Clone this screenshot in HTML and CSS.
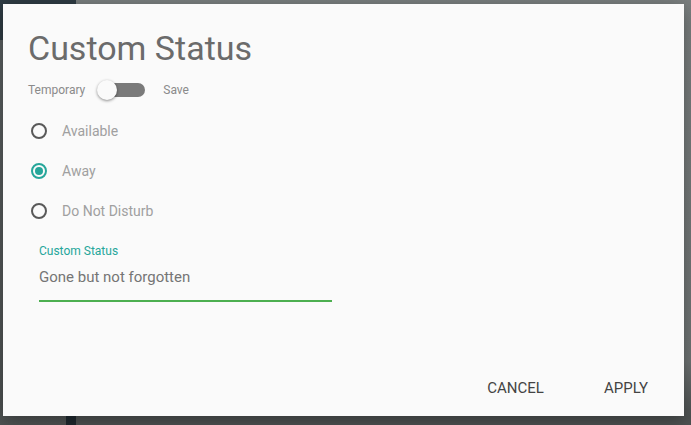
FILE: index.html
```html
<!DOCTYPE html>
<html lang="en">
<head>
  <meta charset="UTF-8" />
  <meta name="viewport" content="width=device-width, initial-scale=1.0"/>
  <title>Custom Status</title>
  <link rel="stylesheet" href="styles.css">
</head>
<body>
  <div class="app">
    <div class="sidebar">
      <div class="sidebar-top"></div>
      <div class="sidebar-body">
        <div class="sidebar-list"></div>
        <div class="sidebar-edge"></div>
      </div>
    </div>
    <div class="main"></div>
  </div>

  <div class="dialog">
    <h1 class="dialog-title">Custom Status</h1>

    <div class="switch-row">
      <span class="switch-label">Temporary</span>
      <span class="switch">
        <span class="switch-track"></span>
        <span class="switch-thumb"></span>
      </span>
      <span class="switch-label">Save</span>
    </div>

    <div class="radio-group">
      <label class="radio"><span class="radio-dot"></span>Available</label>
      <label class="radio checked"><span class="radio-dot"></span>Away</label>
      <label class="radio"><span class="radio-dot"></span>Do Not Disturb</label>
    </div>

    <div class="field">
      <div class="field-label">Custom Status</div>
      <div class="field-input">Gone but not forgotten</div>
    </div>

    <div class="actions">
      <button class="btn">Cancel</button>
      <button class="btn">Apply</button>
    </div>
  </div>
</body>
</html>
```

FILE: styles.css
```css
* {
  margin: 0;
  padding: 0;
  box-sizing: border-box;
}

html, body {
  width: 100%;
  height: 100%;
  overflow: hidden;
  font-family: Roboto, 'Liberation Sans', sans-serif;
  background-color: #4e5252;
}

/* app behind the modal */
.app {
  display: flex;
  height: 100%;
}

.sidebar {
  width: 76px;
  display: flex;
  flex-direction: column;
}

.sidebar-top {
  height: 40px;
  background: #2f3c44;
}

.sidebar-body {
  flex: 1;
  display: flex;
}

.sidebar-list {
  flex: 1;
  background: linear-gradient(to bottom, #5b6061, #4f5353);
}

.sidebar-edge {
  width: 10px;
  background: #1f292f;
}

.main {
  flex: 1;
  background: linear-gradient(to bottom, #7b8080, #6f7474 85%, #4e5252 98%);
}

/* dialog */
.dialog {
  position: absolute;
  top: 4px;
  left: 3px;
  width: 681px;
  height: 412px;
  background: #fafafa;
  box-shadow: 0 4px 18px rgba(0,0,0,0.35);
  padding: 25px 25px 0;
  display: flex;
  flex-direction: column;
}

.dialog-title {
  font-size: 34px;
  font-weight: 400;
  color: #6b6b6b;
  line-height: 38px;
}

.switch-row {
  display: flex;
  align-items: center;
  margin-top: 13px;
  height: 20px;
}

.switch-label {
  font-size: 12px;
  color: #8a8a8a;
}

.switch {
  position: relative;
  width: 48px;
  height: 20px;
  margin: 0 18px 0 12px;
  display: flex;
  align-items: center;
}

.switch-track {
  margin-left: 4px;
  width: 44px;
  height: 14px;
  border-radius: 7px;
  background: #7a7a7a;
}

.switch-thumb {
  position: absolute;
  left: 0;
  top: 0;
  width: 20px;
  height: 20px;
  border-radius: 50%;
  background: #fafafa;
  box-shadow: 0 1px 3px rgba(0,0,0,0.45);
}

.radio-group {
  display: flex;
  flex-direction: column;
  margin-top: 11px;
}

.radio {
  display: flex;
  align-items: center;
  height: 40px;
  font-size: 14px;
  color: #a0a0a0;
}

.radio-dot {
  width: 16px;
  height: 16px;
  border: 2px solid #595959;
  border-radius: 50%;
  margin: 0 15px 0 3px;
  display: flex;
  align-items: center;
  justify-content: center;
}

.radio.checked .radio-dot {
  border-color: #26a69a;
}

.radio.checked .radio-dot::after {
  content: "";
  width: 8px;
  height: 8px;
  border-radius: 50%;
  background: #26a69a;
}

.field {
  width: 293px;
  margin: 12px 0 0 11px;
}

.field-label {
  font-size: 12px;
  color: #26a69a;
  line-height: 16px;
}

.field-input {
  font-size: 15px;
  color: #757575;
  line-height: 20px;
  padding: 8px 0 13px;
  border-bottom: 2px solid #4caf50;
}

.actions {
  margin-top: auto;
  display: flex;
  justify-content: flex-end;
  gap: 44px;
  padding: 0 3px 10px 0;
}

.btn {
  border: none;
  background: none;
  font-family: inherit;
  font-size: 15px;
  text-transform: uppercase;
  color: #444;
  height: 36px;
  padding: 0 8px;
}
```
